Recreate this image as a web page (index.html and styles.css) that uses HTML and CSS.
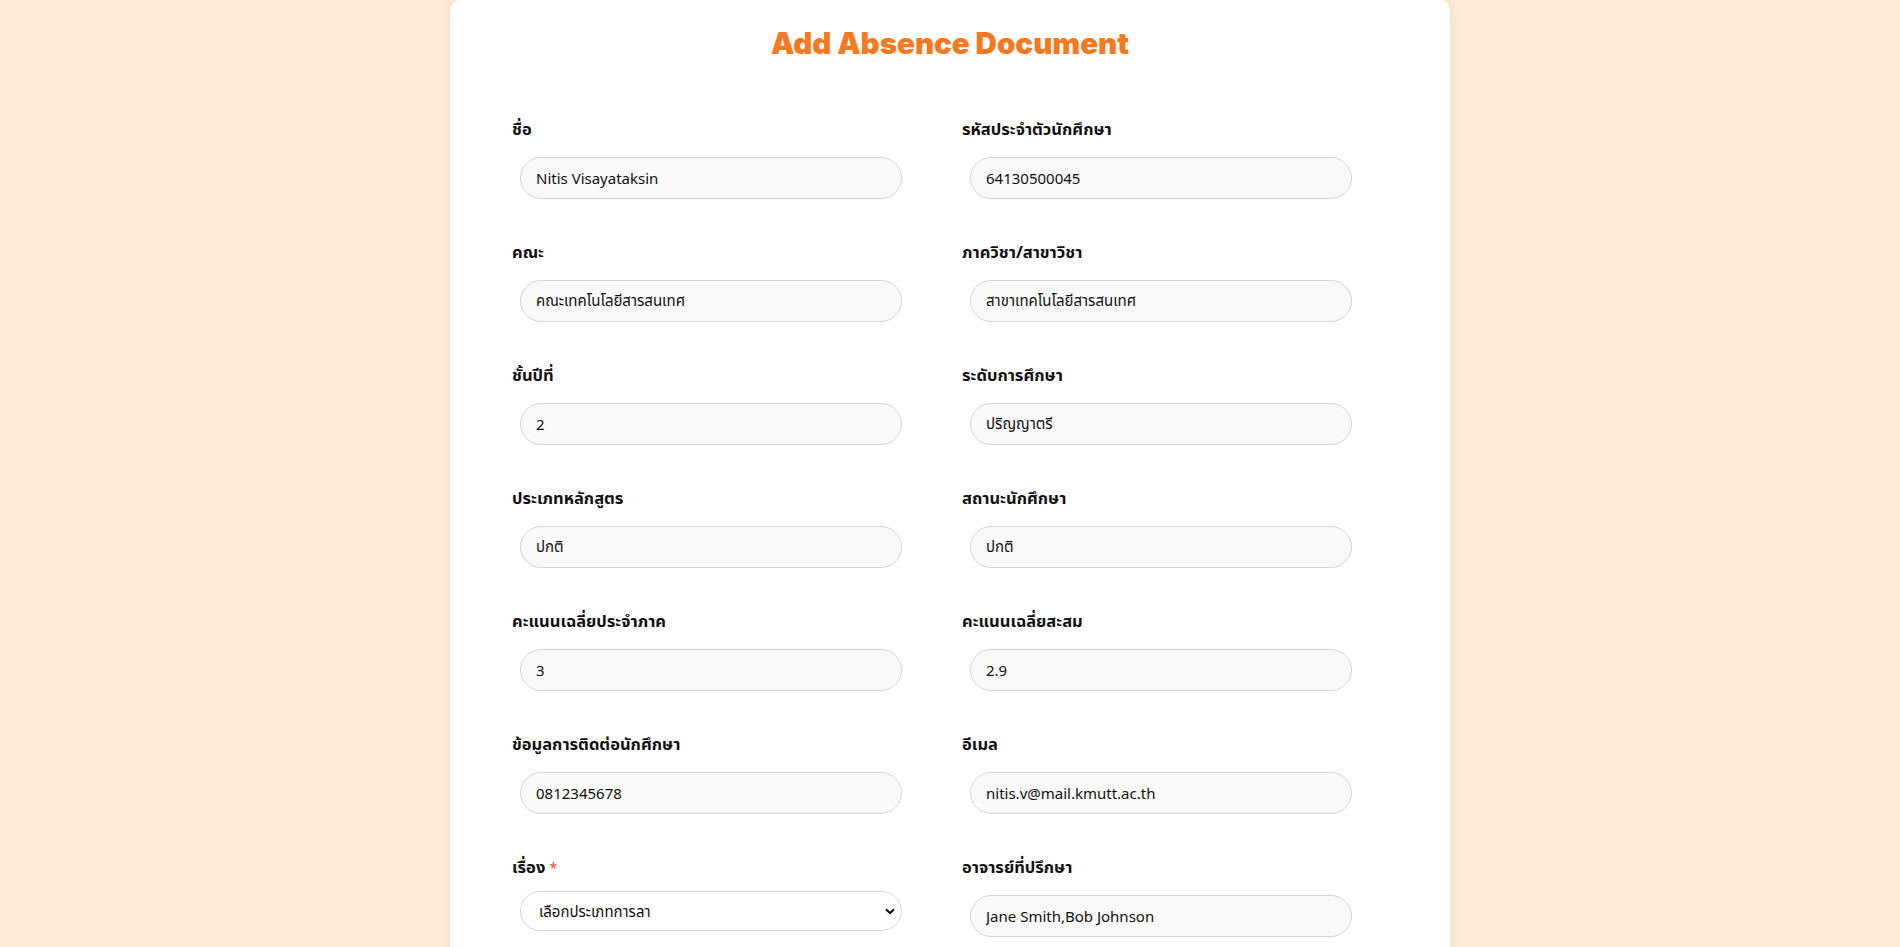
FILE: index.html
```html
<!DOCTYPE html>
<html lang="th">
<head>
<meta charset="utf-8">
<title>Add Absence Document</title>
<link rel="stylesheet" href="styles.css">
</head>
<body>
<main class="card">
  <h1 class="title">Add Absence Document</h1>
  <form class="form-grid">
    <div class="field">
      <label class="label">ชื่อ</label>
      <input class="input" type="text" value="Nitis Visayataksin">
    </div>
    <div class="field">
      <label class="label">รหัสประจำตัวนักศึกษา</label>
      <input class="input" type="text" value="64130500045">
    </div>
    <div class="field">
      <label class="label">คณะ</label>
      <input class="input" type="text" value="คณะเทคโนโลยีสารสนเทศ">
    </div>
    <div class="field">
      <label class="label">ภาควิชา/สาขาวิชา</label>
      <input class="input" type="text" value="สาขาเทคโนโลยีสารสนเทศ">
    </div>
    <div class="field">
      <label class="label">ชั้นปีที่</label>
      <input class="input" type="text" value="2">
    </div>
    <div class="field">
      <label class="label">ระดับการศึกษา</label>
      <input class="input" type="text" value="ปริญญาตรี">
    </div>
    <div class="field">
      <label class="label">ประเภทหลักสูตร</label>
      <input class="input" type="text" value="ปกติ">
    </div>
    <div class="field">
      <label class="label">สถานะนักศึกษา</label>
      <input class="input" type="text" value="ปกติ">
    </div>
    <div class="field">
      <label class="label">คะแนนเฉลี่ยประจำภาค</label>
      <input class="input" type="text" value="3">
    </div>
    <div class="field">
      <label class="label">คะแนนเฉลี่ยสะสม</label>
      <input class="input" type="text" value="2.9">
    </div>
    <div class="field">
      <label class="label">ข้อมูลการติดต่อนักศึกษา</label>
      <input class="input" type="text" value="0812345678">
    </div>
    <div class="field">
      <label class="label">อีเมล</label>
      <input class="input" type="text" value="nitis.v@mail.kmutt.ac.th">
    </div>
    <div class="field">
      <label class="label">เรื่อง <span class="req">*</span></label>
      <div class="select-wrap">
        <select class="select">
          <option>เลือกประเภทการลา</option>
        </select>
        <svg class="chevron" width="10" height="7" viewBox="0 0 10 7"><path d="M1 1.2 L5 5 L9 1.2" fill="none" stroke="#111" stroke-width="2"/></svg>
      </div>
    </div>
    <div class="field">
      <label class="label">อาจารย์ที่ปรึกษา</label>
      <input class="input" type="text" value="Jane Smith,Bob Johnson">
    </div>
  </form>
</main>
</body>
</html>
```

FILE: styles.css
```css
* { box-sizing: border-box; }

body {
  margin: 0;
  background: #fdebd3;
  font-family: "Noto Sans", "Noto Sans Thai", "Open Sans", sans-serif;
  color: #111;
}

.card {
  width: 1000px;
  margin: 0 auto;
  background: #fff;
  border-radius: 10px;
  box-shadow: 0 0 12px rgba(0, 0, 0, 0.08);
  padding: 23px 62px 60px;
}

.title {
  margin: 0 0 55px;
  text-align: center;
  color: #f47920;
  font-family: "Inter", "Lato", sans-serif;
  font-weight: 900;
  font-size: 29.5px;
  line-height: 40px;
  letter-spacing: 0;
}

.form-grid {
  display: grid;
  grid-template-columns: 1fr 1fr;
  column-gap: 24px;
  row-gap: 42px;
}

.field {
  display: flex;
  flex-direction: column;
  align-items: flex-start;
}

.label {
  font-size: 16.5px;
  font-weight: 700;
  line-height: 22px;
}

.req {
  color: #e04848;
  font-weight: 400;
  font-size: 14px;
}

.input {
  margin: 17px 0 0 8px;
  width: 382px;
  height: 42px;
  border: 1px solid #d6d6d6;
  border-radius: 21px;
  background: #f9f9f9;
  padding: 0 15px;
  font-family: "Noto Sans", "Noto Sans Thai", sans-serif;
  font-size: 15px;
  color: #111;
  outline: none;
}

.select-wrap {
  position: relative;
  margin: 12px 0 0 8px;
  width: 382px;
}

.select {
  appearance: none;
  -webkit-appearance: none;
  width: 100%;
  height: 40px;
  border: 1px solid #d6d6d6;
  border-radius: 20px;
  background: #fff;
  padding: 0 18px;
  font-family: "Noto Sans", "Noto Sans Thai", sans-serif;
  font-size: 15px;
  color: #111;
  outline: none;
}

.chevron {
  position: absolute;
  right: 7px;
  top: 17px;
  pointer-events: none;
}
```
